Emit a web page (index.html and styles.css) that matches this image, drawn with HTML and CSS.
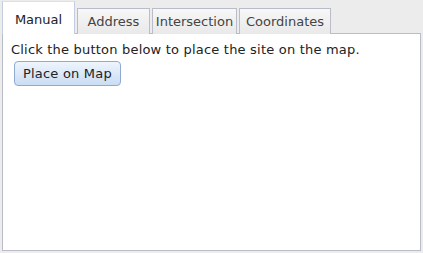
FILE: index.html
```html
<!DOCTYPE html>
<html lang="en">
<head>
    <meta charset="UTF-8">
    <title>Locate Site</title>
    <link rel="stylesheet" href="styles.css">
</head>
<body>
    <div class="tabs">
        <ul class="tab-nav">
            <li class="tab active">Manual</li>
            <li class="tab">Address</li>
            <li class="tab">Intersection</li>
            <li class="tab">Coordinates</li>
        </ul>
        <div class="tab-panel">
            <p class="hint">Click the button below to place the site on the map.</p>
            <button type="button" class="place-btn">Place on Map</button>
        </div>
    </div>
</body>
</html>
```

FILE: styles.css
```css
* {
    margin: 0;
    padding: 0;
    box-sizing: border-box;
}

html, body {
    height: 100%;
}

body {
    background: #ececec;
    font-family: "DejaVu Sans", sans-serif;
    font-size: 13px;
    color: #222;
    padding: 2px 2px 2px 2px;
}

.tabs {
    display: flex;
    flex-direction: column;
    height: 100%;
}

.tab-nav {
    list-style: none;
    display: flex;
    align-items: flex-end;
    gap: 2px;
    height: 32px;
    position: relative;
    z-index: 1;
    margin-bottom: -1px;
}

.tab {
    height: 26px;
    padding: 0 4px;
    display: flex;
    align-items: center;
    justify-content: center;
    border: 1px solid #b9bdca;
    border-bottom: none;
    background: linear-gradient(#f7f7f7, #e9e9e9);
    color: #444;
}

.tab.active {
    height: 33px;
    width: 73px;
    background: #fff;
    border-color: #c5cee0;
    border-top-color: #d6e2f2;
    color: #222;
    padding-top: 2px;
}

.tab:nth-child(2) { width: 73px; }
.tab:nth-child(3) { width: 85px; }
.tab:nth-child(4) { width: 92px; }

.tab-panel {
    flex: 1;
    background: #fff;
    border: 1px solid #b9bdca;
    padding: 7px 8px;
}

.hint {
    line-height: 17px;
    margin-bottom: 3px;
    letter-spacing: 0.2px;
}

.place-btn {
    margin-left: 3px;
    font-family: inherit;
    font-size: 13px;
    letter-spacing: 0.2px;
    color: #222;
    height: 25px;
    padding: 0 8px;
    border: 1px solid #8fabd0;
    border-radius: 4px;
    background: linear-gradient(#eef5fd, #c9ddf3);
}
```
